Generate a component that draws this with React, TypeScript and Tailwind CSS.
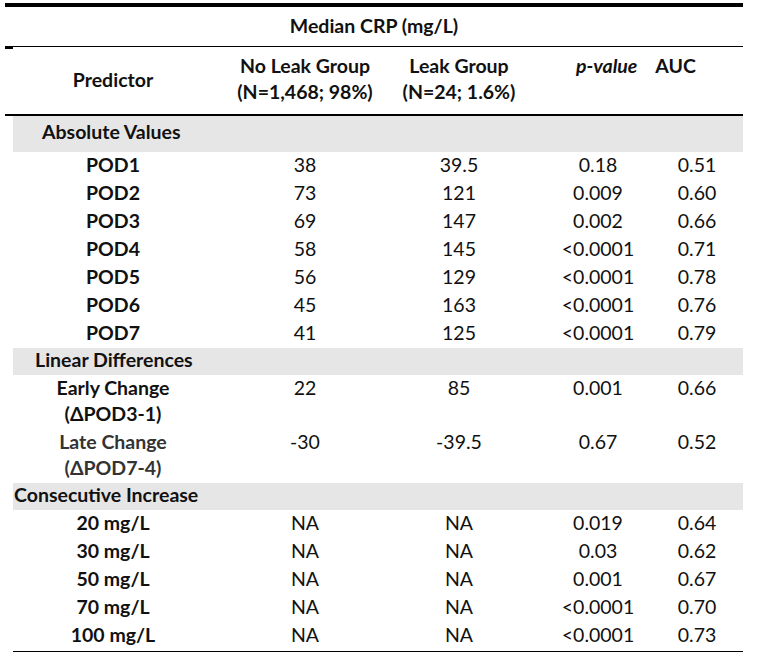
const body: { label: string; a: string; b: string; p: string; auc: string }[] = [
  { label: "POD1", a: "38", b: "39.5", p: "0.18", auc: "0.51" },
  { label: "POD2", a: "73", b: "121", p: "0.009", auc: "0.60" },
  { label: "POD3", a: "69", b: "147", p: "0.002", auc: "0.66" },
  { label: "POD4", a: "58", b: "145", p: "<0.0001", auc: "0.71" },
  { label: "POD5", a: "56", b: "129", p: "<0.0001", auc: "0.78" },
  { label: "POD6", a: "45", b: "163", p: "<0.0001", auc: "0.76" },
  { label: "POD7", a: "41", b: "125", p: "<0.0001", auc: "0.79" },
];

const increases = [
  { label: "20 mg/L", p: "0.019", auc: "0.64" },
  { label: "30 mg/L", p: "0.03", auc: "0.62" },
  { label: "50 mg/L", p: "0.001", auc: "0.67" },
  { label: "70 mg/L", p: "<0.0001", auc: "0.70" },
  { label: "100 mg/L", p: "<0.0001", auc: "0.73" },
];

const cols = "grid grid-cols-[200px_184px_124px_154px_44px]";

const Row = ({ label, a, b, p, auc }: { label: string; a: string; b: string; p: string; auc: string }) => (
  <div className={`${cols} h-[28px] pb-[3px] items-center text-center`}>
    <div className="font-bold">{label}</div>
    <div>{a}</div>
    <div>{b}</div>
    <div>{p}</div>
    <div>{auc}</div>
  </div>
);

const Section = ({ title, indent, tall }: { title: string; indent: string; tall?: boolean }) => (
  <div className={`bg-[#e7e6e6] flex items-center font-bold ${tall ? "h-[36px] pb-[5px]" : "h-[27px] pb-[3px]"} ${indent}`}>
    {title}
  </div>
);

const TwoLine = ({ top, bottom, a, b, p, auc, tone }: { top: string; bottom: string; a: string; b: string; p: string; auc: string; tone: string }) => (
  <div className={`${cols} h-[54px] text-center leading-[26px]`}>
    <div className={`font-bold ${tone}`}>
      <div>{top}</div>
      <div>{bottom}</div>
    </div>
    <div>{a}</div>
    <div>{b}</div>
    <div>{p}</div>
    <div>{auc}</div>
  </div>
);

export default function App() {
  return (
    <div className="w-[758px] h-[662px] bg-white text-[#111] text-[19.5px] leading-[24px] font-['Lato','Liberation_Sans',sans-serif] pt-[3px]">
      <div className="ml-[5px] w-[738px]">
        <div className="h-[4px] bg-black" />
        <div className="h-[39px] flex items-center justify-center font-bold pb-[2px]">Median CRP (mg/L)</div>
        <div className="flex items-start">
          <div className="w-[8px] h-[3px] bg-black" />
          <div className="flex-1 h-px bg-black" />
        </div>
        <div className={`${cols} h-[65px] ml-[8px] font-bold leading-[26px] pt-[4px]`}>
          <div className="flex items-center justify-center pb-[8px]">Predictor</div>
          <div className="text-center">
            <div>No Leak Group</div>
            <div>(N=1,468; 98%)</div>
          </div>
          <div className="text-center">
            <div>Leak Group</div>
            <div>(N=24; 1.6%)</div>
          </div>
          <div className="col-span-2 flex gap-[18px] pl-[55px]">
            <span className="italic">p-value</span>
            <span>AUC</span>
          </div>
        </div>
        <div className="h-[2px] bg-black" />
      </div>

      <div className="ml-[13px] w-[730px]">
        <Section title="Absolute Values" indent="pl-[29px]" tall />
        {body.map((r) => (
          <Row key={r.label} {...r} />
        ))}
        <Section title="Linear Differences" indent="pl-[22px]" />
        <TwoLine top="Early Change" bottom="(ΔPOD3-1)" a="22" b="85" p="0.001" auc="0.66" tone="text-[#111]" />
        <TwoLine top="Late Change" bottom="(ΔPOD7-4)" a="-30" b="-39.5" p="0.67" auc="0.52" tone="text-[#333]" />
        <Section title="Consecutive Increase" indent="pl-[1px]" />
        {increases.map((r) => (
          <Row key={r.label} label={r.label} a="NA" b="NA" p={r.p} auc={r.auc} />
        ))}
        <div className="h-px bg-black mt-[1px]" />
      </div>
    </div>
  );
}
